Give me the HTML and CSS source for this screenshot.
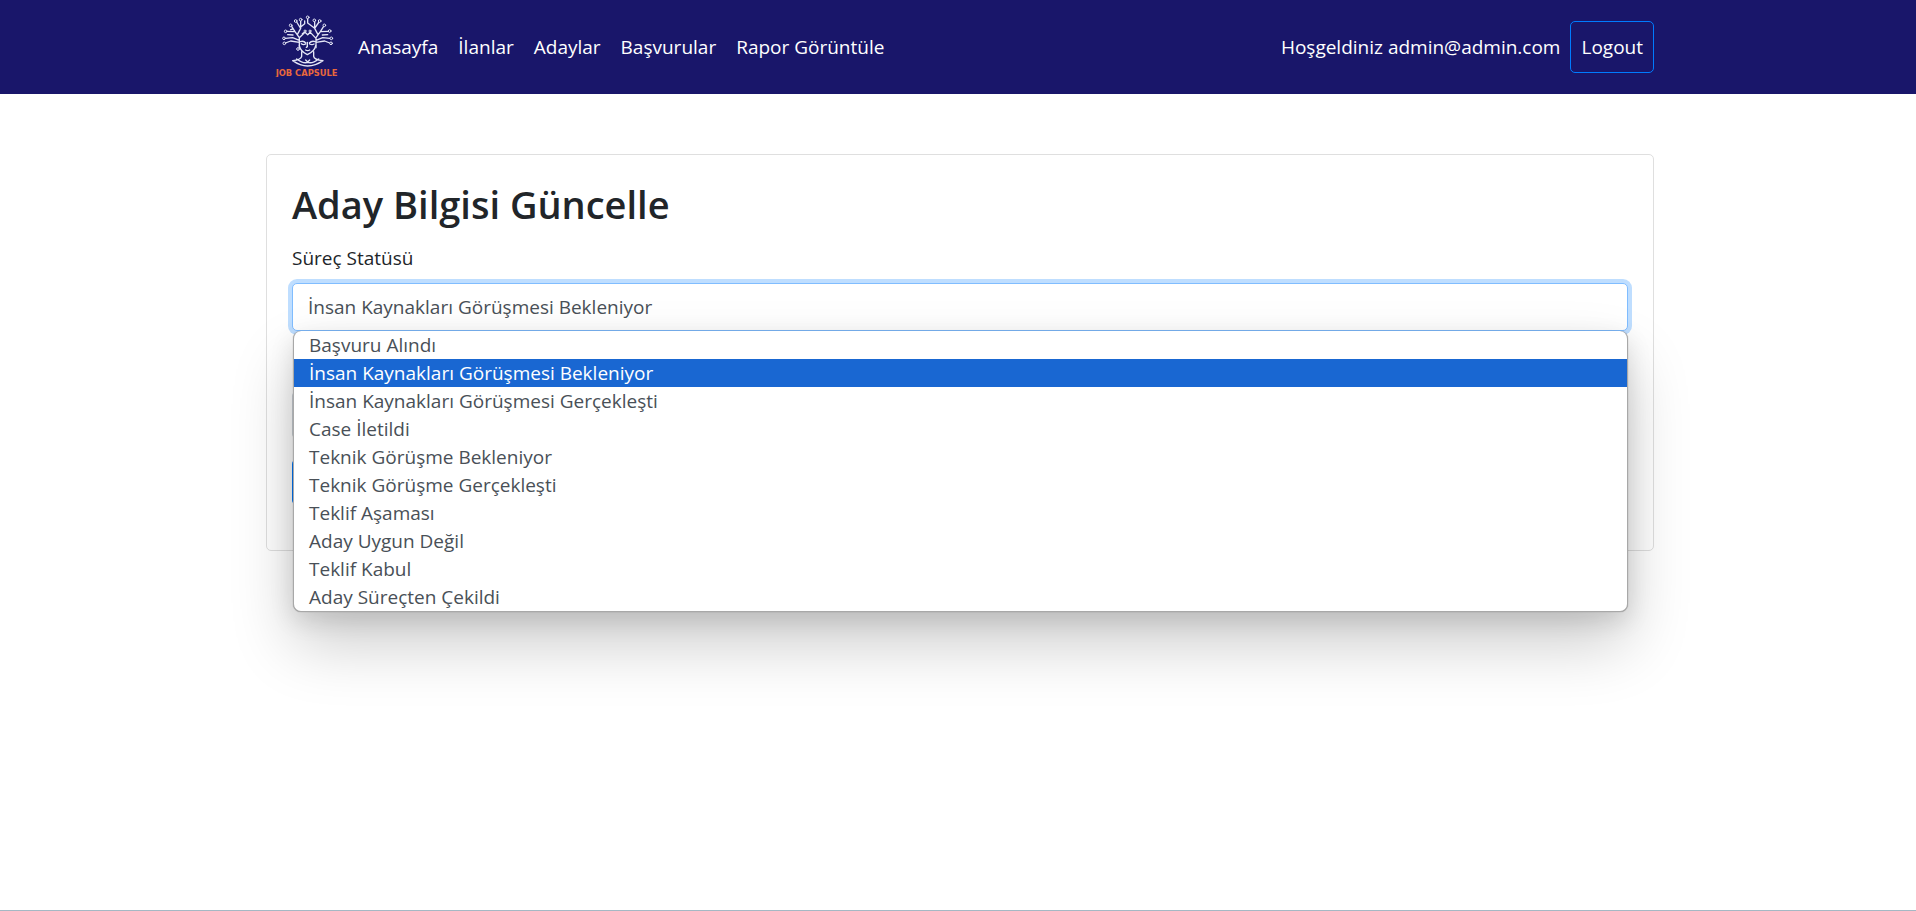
FILE: index.html
```html
<!DOCTYPE html>
<html lang="tr">
<head>
  <meta charset="utf-8">
  <meta name="viewport" content="width=device-width, initial-scale=1">
  <title>Aday Bilgisi Güncelle</title>
  <link rel="stylesheet" href="styles.css">
</head>
<body>
  <header class="topbar">
    <div class="container topbar-inner">
      <a class="brand" href="#" aria-label="Job Capsule">
        <svg class="brand-logo" viewBox="54 36 201 192" aria-hidden="true">
          <g fill="none" stroke="#e4e6f6" stroke-width="4" stroke-linecap="round" stroke-linejoin="round">
            <path d="M130 140V110L117 92L107 76M117 92L92 91M124 101L134 82V60M134 82L122 63M130 118L110 110L88 112M130 124L104 120L88 126M111 102L95 101M110 84L104 86M134 78L146 68V60M139 98L147 92M130 110L147 94L155 101"/>
            <path d="M180 140V110L193 92L203 76M193 92L218 91M186 101L176 82V61M176 82L189 63M180 118L200 110L222 112M180 124L206 120L221 126M199 102L215 101M176 82L155 66V53M155 101L163 93M180 112L163 94"/>
            <path d="M130 134Q133 151 154 161Q176 151 179 134M133 122Q143 118 149 126M160 126Q167 118 178 122M136 128Q142 133 149 129M161 129Q168 133 174 129M154 124V137L151 139M149 147Q155 151 161 147M137 152V166Q135 176 110 179Q133 195 155 195Q178 195 201 179Q174 176 173 166V152M122 174Q143 189 155 184Q169 189 188 174M149 177L155 183L161 177"/>
            <g fill="#19166a" stroke-width="3">
              <circle cx="155" cy="49" r="4"/><circle cx="134" cy="56" r="4"/><circle cx="175" cy="58" r="4"/>
              <circle cx="119" cy="60" r="4"/><circle cx="191" cy="60" r="4"/><circle cx="104" cy="73" r="4"/>
              <circle cx="205" cy="73" r="4"/><circle cx="89" cy="91" r="4"/><circle cx="221" cy="90" r="4"/>
              <circle cx="84" cy="112" r="4"/><circle cx="226" cy="112" r="4"/><circle cx="85" cy="127" r="4"/>
              <circle cx="225" cy="127" r="4"/><circle cx="147" cy="90" r="3"/><circle cx="162" cy="90" r="3"/>
              <circle cx="126" cy="144" r="4"/>
            </g>
          </g>
          <text class="brand-name" x="59" y="225">JOB CAPSULE</text>
        </svg>
      </a>
      <nav class="menu">
        <a href="#">Anasayfa</a>
        <a href="#">İlanlar</a>
        <a href="#">Adaylar</a>
        <a href="#">Başvurular</a>
        <a href="#">Rapor Görüntüle</a>
      </nav>
      <div class="account">
        <span>Hoşgeldiniz admin@admin.com</span>
        <button class="logout" type="button">Logout</button>
      </div>
    </div>
  </header>

  <main class="container content">
    <form class="card">
      <h1 class="card-title">Aday Bilgisi Güncelle</h1>
      <div class="field">
        <label for="status">Süreç Statüsü</label>
        <div class="dropdown">
          <select class="control control-active" id="status">
            <option>İnsan Kaynakları Görüşmesi Bekleniyor</option>
          </select>
          <ul class="options" role="listbox" aria-label="Süreç Statüsü">
            <li role="option">Başvuru Alındı</li>
            <li role="option" class="selected" aria-selected="true">İnsan Kaynakları Görüşmesi Bekleniyor</li>
            <li role="option">İnsan Kaynakları Görüşmesi Gerçekleşti</li>
            <li role="option">Case İletildi</li>
            <li role="option">Teknik Görüşme Bekleniyor</li>
            <li role="option">Teknik Görüşme Gerçekleşti</li>
            <li role="option">Teklif Aşaması</li>
            <li role="option">Aday Uygun Değil</li>
            <li role="option">Teklif Kabul</li>
            <li role="option">Aday Süreçten Çekildi</li>
          </ul>
        </div>
      </div>
      <div class="field field-second">
        <input class="control" type="text" aria-label="Açıklama">
      </div>
      <button class="submit" type="submit" aria-label="Güncelle"></button>
    </form>
  </main>

  <footer class="footer"></footer>
</body>
</html>
```
FILE: styles.css
```css
* {
  box-sizing: border-box;
}

body {
  display: flex;
  flex-direction: column;
  min-height: 100vh;
  margin: 0;
  background: #fff;
  color: #212529;
  font-family: "Open Sans", "Noto Sans", sans-serif;
  font-size: 19px;
  line-height: 30px;
}

button,
input,
select {
  font: inherit;
}

.container {
  width: 100%;
  max-width: 1428px;
  margin: 0 auto;
  padding: 0 18px 0 22px;
}

.topbar {
  background: #19166a;
  color: #fff;
}

.topbar-inner {
  display: flex;
  align-items: center;
  min-height: 94px;
}

.brand {
  margin: 0 7px 5px 8px;
}

.brand-logo {
  display: block;
  width: 67px;
  height: 64px;
}

.brand-name {
  fill: #e8673c;
  font-family: "DejaVu Sans", sans-serif;
  font-size: 25px;
  font-weight: 700;
}

.menu {
  display: flex;
}

.menu a {
  padding: 10px;
  color: #fff;
  text-decoration: none;
}

.account {
  display: flex;
  align-items: center;
  gap: 10px;
  margin-left: auto;
}

.logout {
  padding: 10px;
  border: 1px solid #007bff;
  border-radius: 5px;
  background: transparent;
  color: #fff;
}

.content {
  flex: 1;
  padding-top: 60px;
}

.card {
  padding: 25px 25px 45px;
  border: 1px solid #dfdfdf;
  border-radius: 5px;
}

.card-title {
  margin: 0 0 15px;
  font-size: 38px;
  font-weight: 600;
  line-height: 48px;
}

.field {
  margin-bottom: 20px;
}

.field label {
  display: block;
  margin-bottom: 10px;
}

.field-second {
  padding-top: 40px;
}

.dropdown {
  position: relative;
}

.control {
  display: block;
  width: 100%;
  height: 48px;
  padding: 0 15px;
  border: 1px solid #ced4da;
  border-radius: 5px;
  background: #fff;
  color: #495057;
  appearance: none;
}

.control-active {
  border-color: #80bdff;
  box-shadow: 0 0 0 4px #bfdeff;
}

.options {
  position: absolute;
  top: 100%;
  left: 1px;
  right: 0;
  z-index: 1;
  margin: 0;
  padding: 0;
  border: 1px solid #a8a8a8;
  border-top: 0;
  border-radius: 8px;
  background: #fff;
  box-shadow: 0 0 1px rgba(0, 0, 0, 0.4), 0 32px 64px rgba(0, 0, 0, 0.2), 0 8px 24px rgba(0, 0, 0, 0.12);
  color: #495057;
  line-height: 28px;
  list-style: none;
}

.options li {
  padding: 0 15px;
}

.options .selected {
  background: #1967d2;
  color: #fff;
}

.submit {
  display: block;
  width: 110px;
  height: 46px;
  border: 0;
  border-radius: 5px;
  background: #007bff;
}

.footer {
  border-top: 1px solid #a5b8c4;
}
```
